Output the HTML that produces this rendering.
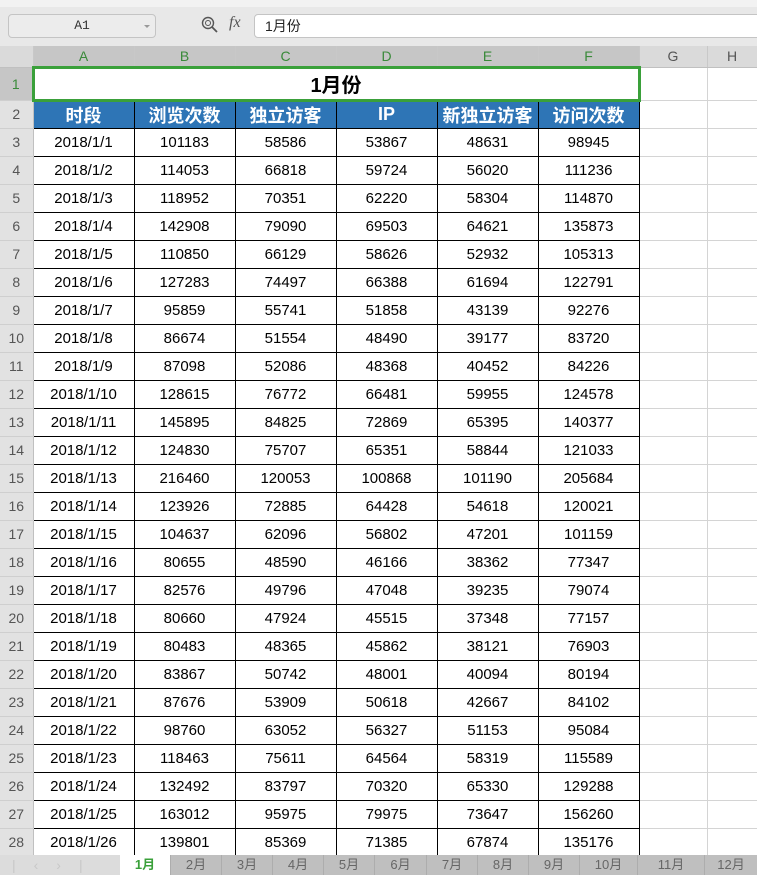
<!DOCTYPE html>
<html><head><meta charset="utf-8"><style>
*{margin:0;padding:0;box-sizing:border-box}
body{width:757px;height:875px;overflow:hidden;background:#fff;font-family:"Liberation Sans","Noto Sans CJK SC",sans-serif;position:relative}
.top{position:absolute;left:0;top:0;width:757px;height:46px;background:#e8e8e8;border-top:7px solid #f2f2f2}
.nb{position:absolute;left:8px;top:14px;width:148px;height:24px;border:1px solid #c4c4c4;border-radius:4px;background:#ececec;font:13px "Liberation Mono",monospace;color:#333;text-align:center;line-height:22px}
.nb:after{content:"";position:absolute;right:5px;top:10px;border:3px solid transparent;border-top-color:#999}
.fb{position:absolute;left:254px;top:14px;width:510px;height:24px;border:1px solid #c4c4c4;border-radius:4px;background:#fff;font-size:14px;line-height:22px;padding-left:10px;color:#222}
.fx{position:absolute;left:229px;top:14px;font:italic 16px "Liberation Serif",serif;color:#555}
table{position:absolute;left:0;top:46px;border-collapse:collapse;table-layout:fixed;width:757px}
td{padding:0;text-align:center;font-size:15px;color:#000;white-space:nowrap;overflow:hidden}
tr.ch td{height:21px;background:#dadada;color:#555;font-size:14px;border-right:1px solid #c8c8c8;border-bottom:1px solid #c0c0c0}
tr.ch td.s{background:#c6c6c6;color:#3a8a3a}
td.rh{background:#e2e2e2;color:#555;font-size:14px;border-right:1px solid #c0c0c0;border-bottom:1px solid #cfcfcf}
td.g{border-right:1px solid #d4d4d4;border-bottom:1px solid #d4d4d4}
tr.r td{height:28px}
td.d{border:1px solid #000}
tr.hd td.h{background:#2e75b6;color:#fff;font-weight:bold;font-size:18px;border:1px solid #000;height:27px}
.t1{font-weight:bold;font-size:20px;border:3px solid #3aa03a!important}
.tabs{position:absolute;left:0;top:855px;width:757px;height:20px;background:#bfbfbf;font-size:13px;color:#666}
.tabs .nav{position:absolute;left:0;top:0;width:120px;height:20px;background:#dcdcdc;color:#c8c8c8;font-size:14px;line-height:20px;letter-spacing:18px;padding-left:12px}
.tabs div.t{position:absolute;top:0;height:20px;line-height:20px;text-align:center;border-left:1px solid #adadad}
.tabs .a{background:#fff;color:#3aa03a;font-weight:bold;border:none!important}
</style></head><body>
<div class="top"></div>
<div class="nb">A1</div>
<svg style="position:absolute;left:201px;top:16px" width="18" height="18" viewBox="0 0 18 18"><circle cx="7" cy="7" r="5.5" fill="none" stroke="#555" stroke-width="1.4"/><circle cx="7" cy="7" r="2.5" fill="none" stroke="#555" stroke-width="1"/><path d="M11 11l5 5" stroke="#555" stroke-width="1.8"/></svg>
<div class="fx">fx</div>
<div class="fb">1月份</div>
<table>
<colgroup><col style="width:33px"><col style="width:101px"><col style="width:101px"><col style="width:101px"><col style="width:101px"><col style="width:101px"><col style="width:101px"><col style="width:68px"><col style="width:50px"></colgroup>
<tr class="ch"><td></td><td class="s">A</td><td class="s">B</td><td class="s">C</td><td class="s">D</td><td class="s">E</td><td class="s">F</td><td>G</td><td>H</td></tr>
<tr><td class="rh" style="height:33px;background:#c6c6c6;color:#3a8a3a">1</td><td colspan="6" class="t1">1月份</td><td class="g"></td><td class="g"></td></tr>
<tr class="hd"><td class="rh">2</td><td class="h">时段</td><td class="h">浏览次数</td><td class="h">独立访客</td><td class="h">IP</td><td class="h">新独立访客</td><td class="h">访问次数</td><td class="g"></td><td class="g"></td></tr>
<tr class="r"><td class="rh">3</td><td class="d">2018/1/1</td><td class="d">101183</td><td class="d">58586</td><td class="d">53867</td><td class="d">48631</td><td class="d">98945</td><td class="g"></td><td class="g"></td></tr>
<tr class="r"><td class="rh">4</td><td class="d">2018/1/2</td><td class="d">114053</td><td class="d">66818</td><td class="d">59724</td><td class="d">56020</td><td class="d">111236</td><td class="g"></td><td class="g"></td></tr>
<tr class="r"><td class="rh">5</td><td class="d">2018/1/3</td><td class="d">118952</td><td class="d">70351</td><td class="d">62220</td><td class="d">58304</td><td class="d">114870</td><td class="g"></td><td class="g"></td></tr>
<tr class="r"><td class="rh">6</td><td class="d">2018/1/4</td><td class="d">142908</td><td class="d">79090</td><td class="d">69503</td><td class="d">64621</td><td class="d">135873</td><td class="g"></td><td class="g"></td></tr>
<tr class="r"><td class="rh">7</td><td class="d">2018/1/5</td><td class="d">110850</td><td class="d">66129</td><td class="d">58626</td><td class="d">52932</td><td class="d">105313</td><td class="g"></td><td class="g"></td></tr>
<tr class="r"><td class="rh">8</td><td class="d">2018/1/6</td><td class="d">127283</td><td class="d">74497</td><td class="d">66388</td><td class="d">61694</td><td class="d">122791</td><td class="g"></td><td class="g"></td></tr>
<tr class="r"><td class="rh">9</td><td class="d">2018/1/7</td><td class="d">95859</td><td class="d">55741</td><td class="d">51858</td><td class="d">43139</td><td class="d">92276</td><td class="g"></td><td class="g"></td></tr>
<tr class="r"><td class="rh">10</td><td class="d">2018/1/8</td><td class="d">86674</td><td class="d">51554</td><td class="d">48490</td><td class="d">39177</td><td class="d">83720</td><td class="g"></td><td class="g"></td></tr>
<tr class="r"><td class="rh">11</td><td class="d">2018/1/9</td><td class="d">87098</td><td class="d">52086</td><td class="d">48368</td><td class="d">40452</td><td class="d">84226</td><td class="g"></td><td class="g"></td></tr>
<tr class="r"><td class="rh">12</td><td class="d">2018/1/10</td><td class="d">128615</td><td class="d">76772</td><td class="d">66481</td><td class="d">59955</td><td class="d">124578</td><td class="g"></td><td class="g"></td></tr>
<tr class="r"><td class="rh">13</td><td class="d">2018/1/11</td><td class="d">145895</td><td class="d">84825</td><td class="d">72869</td><td class="d">65395</td><td class="d">140377</td><td class="g"></td><td class="g"></td></tr>
<tr class="r"><td class="rh">14</td><td class="d">2018/1/12</td><td class="d">124830</td><td class="d">75707</td><td class="d">65351</td><td class="d">58844</td><td class="d">121033</td><td class="g"></td><td class="g"></td></tr>
<tr class="r"><td class="rh">15</td><td class="d">2018/1/13</td><td class="d">216460</td><td class="d">120053</td><td class="d">100868</td><td class="d">101190</td><td class="d">205684</td><td class="g"></td><td class="g"></td></tr>
<tr class="r"><td class="rh">16</td><td class="d">2018/1/14</td><td class="d">123926</td><td class="d">72885</td><td class="d">64428</td><td class="d">54618</td><td class="d">120021</td><td class="g"></td><td class="g"></td></tr>
<tr class="r"><td class="rh">17</td><td class="d">2018/1/15</td><td class="d">104637</td><td class="d">62096</td><td class="d">56802</td><td class="d">47201</td><td class="d">101159</td><td class="g"></td><td class="g"></td></tr>
<tr class="r"><td class="rh">18</td><td class="d">2018/1/16</td><td class="d">80655</td><td class="d">48590</td><td class="d">46166</td><td class="d">38362</td><td class="d">77347</td><td class="g"></td><td class="g"></td></tr>
<tr class="r"><td class="rh">19</td><td class="d">2018/1/17</td><td class="d">82576</td><td class="d">49796</td><td class="d">47048</td><td class="d">39235</td><td class="d">79074</td><td class="g"></td><td class="g"></td></tr>
<tr class="r"><td class="rh">20</td><td class="d">2018/1/18</td><td class="d">80660</td><td class="d">47924</td><td class="d">45515</td><td class="d">37348</td><td class="d">77157</td><td class="g"></td><td class="g"></td></tr>
<tr class="r"><td class="rh">21</td><td class="d">2018/1/19</td><td class="d">80483</td><td class="d">48365</td><td class="d">45862</td><td class="d">38121</td><td class="d">76903</td><td class="g"></td><td class="g"></td></tr>
<tr class="r"><td class="rh">22</td><td class="d">2018/1/20</td><td class="d">83867</td><td class="d">50742</td><td class="d">48001</td><td class="d">40094</td><td class="d">80194</td><td class="g"></td><td class="g"></td></tr>
<tr class="r"><td class="rh">23</td><td class="d">2018/1/21</td><td class="d">87676</td><td class="d">53909</td><td class="d">50618</td><td class="d">42667</td><td class="d">84102</td><td class="g"></td><td class="g"></td></tr>
<tr class="r"><td class="rh">24</td><td class="d">2018/1/22</td><td class="d">98760</td><td class="d">63052</td><td class="d">56327</td><td class="d">51153</td><td class="d">95084</td><td class="g"></td><td class="g"></td></tr>
<tr class="r"><td class="rh">25</td><td class="d">2018/1/23</td><td class="d">118463</td><td class="d">75611</td><td class="d">64564</td><td class="d">58319</td><td class="d">115589</td><td class="g"></td><td class="g"></td></tr>
<tr class="r"><td class="rh">26</td><td class="d">2018/1/24</td><td class="d">132492</td><td class="d">83797</td><td class="d">70320</td><td class="d">65330</td><td class="d">129288</td><td class="g"></td><td class="g"></td></tr>
<tr class="r"><td class="rh">27</td><td class="d">2018/1/25</td><td class="d">163012</td><td class="d">95975</td><td class="d">79975</td><td class="d">73647</td><td class="d">156260</td><td class="g"></td><td class="g"></td></tr>
<tr class="r"><td class="rh">28</td><td class="d">2018/1/26</td><td class="d">139801</td><td class="d">85369</td><td class="d">71385</td><td class="d">67874</td><td class="d">135176</td><td class="g"></td><td class="g"></td></tr>
</table>
<div class="tabs">
<div class="nav">|‹›|</div>
<div class="t a" style="left:120px;width:50px">1月</div>
<div class="t" style="left:170px;width:51px">2月</div>
<div class="t" style="left:221px;width:51px">3月</div>
<div class="t" style="left:272px;width:51px">4月</div>
<div class="t" style="left:323px;width:51px">5月</div>
<div class="t" style="left:374px;width:52px">6月</div>
<div class="t" style="left:426px;width:51px">7月</div>
<div class="t" style="left:477px;width:51px">8月</div>
<div class="t" style="left:528px;width:51px">9月</div>
<div class="t" style="left:579px;width:58px">10月</div>
<div class="t" style="left:637px;width:67px">11月</div>
<div class="t" style="left:704px;width:53px">12月</div>
</div>
</body></html>
